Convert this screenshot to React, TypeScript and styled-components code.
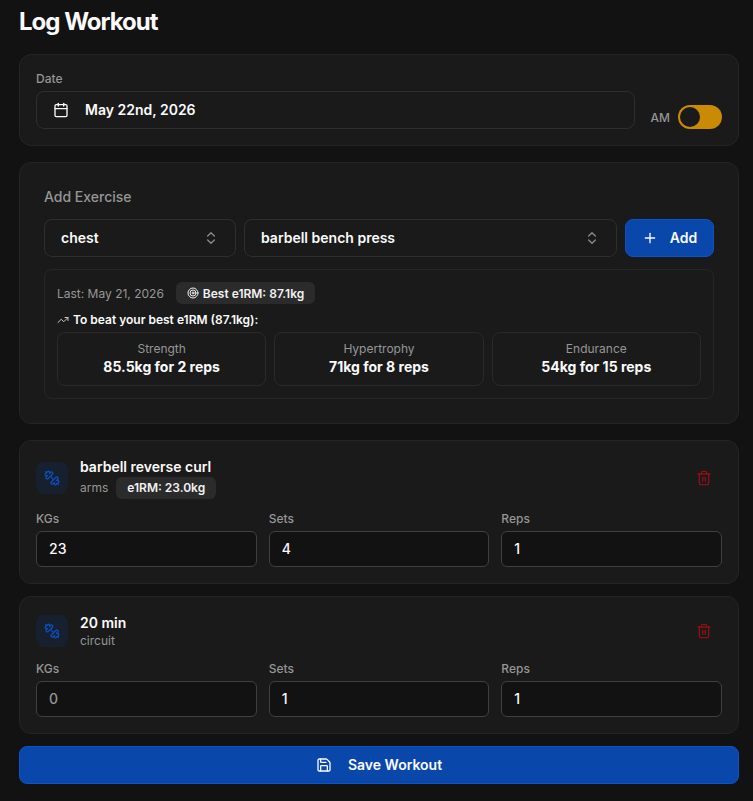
import React from 'react';
import styled, { createGlobalStyle } from 'styled-components';
import { Calendar, ChevronsUpDown, Dumbbell, Plus, Save, Target, Trash2, TrendingUp } from 'lucide-react';

const GlobalStyle = createGlobalStyle`
  html, body {
    margin: 0;
    background: #121212;
    color: #fafafa;
    font-family: Inter, "Liberation Sans", sans-serif;
    height: 801px;
    overflow: hidden;
  }
  * { box-sizing: border-box; }
`;

const Page = styled.div`
  display: flex;
  flex-direction: column;
  padding: 6px 14px 0 19px;
`;

const Title = styled.h1`
  margin: 0 0 16px;
  font-size: 24px;
  line-height: 32px;
  font-weight: 700;
  letter-spacing: -1px;
  color: #fafafa;
`;

const Card = styled.section<{ $mb?: number }>`
  background: #1a1a1a;
  border: 1px solid #242424;
  border-radius: 12px;
  margin-bottom: ${(p) => p.$mb ?? 16}px;
`;

const DateCard = styled(Card)`
  display: flex;
  align-items: flex-end;
  gap: 16px;
  padding: 16px;
  height: 92px;
`;

const DateField = styled.div`
  flex: 1;
`;

const Label = styled.div`
  font-size: 12px;
  line-height: 16px;
  font-weight: 500;
  color: #969696;
  margin-bottom: 4px;
`;

const Outlined = styled.div`
  display: flex;
  align-items: center;
  height: 38px;
  border: 1px solid #2e2e2e;
  border-radius: 8px;
  background: #1a1a1a;
  font-size: 14px;
  line-height: 20px;
  font-weight: 600;
  color: #fafafa;
`;

const DateInput = styled(Outlined)`
  padding: 0 16px;
  gap: 16px;
`;

const Meridiem = styled.div`
  display: flex;
  align-items: center;
  gap: 8px;
  font-size: 12px;
  font-weight: 500;
  color: #969696;
`;

const Toggle = styled.div`
  width: 44px;
  height: 24px;
  border-radius: 12px;
  background: #ca8a04;
  padding: 2px;
`;

const Thumb = styled.div`
  width: 20px;
  height: 20px;
  border-radius: 50%;
  background: #1a1a1a;
`;

const ExerciseCard = styled(Card)`
  padding: 24px;
  height: 262px;
`;

const SectionTitle = styled.div`
  font-size: 14px;
  line-height: 20px;
  font-weight: 500;
  color: #969696;
  margin-bottom: 12px;
`;

const PickerRow = styled.div`
  display: flex;
  gap: 8px;
  margin-bottom: 12px;
`;

const Select = styled(Outlined)<{ $width?: number }>`
  justify-content: space-between;
  padding: 0 16px;
  ${(p) => (p.$width ? `width: ${p.$width}px;` : 'flex: 1;')}
  svg { color: #8a8a8a; }
`;

const PrimaryButton = styled.button`
  display: flex;
  align-items: center;
  justify-content: center;
  gap: 12px;
  border: 1px solid #0f52c4;
  border-radius: 8px;
  background: #0947ab;
  color: #fafafa;
  font-family: inherit;
  font-size: 14px;
  line-height: 20px;
  font-weight: 600;
  padding: 0;
`;

const AddButton = styled(PrimaryButton)`
  width: 89px;
  height: 38px;
`;

const SaveButton = styled(PrimaryButton)`
  width: 720px;
  height: 38px;
  gap: 16px;
`;

const Stats = styled.div`
  border: 1px solid #262626;
  border-radius: 8px;
  padding: 12px;
  height: 130px;
`;

const StatsTop = styled.div`
  display: flex;
  align-items: center;
  gap: 12px;
  font-size: 12px;
  color: #969696;
  height: 22px;
  margin-bottom: 8px;
`;

const Badge = styled.span`
  display: inline-flex;
  align-items: center;
  gap: 4px;
  height: 22px;
  padding: 0 11px;
  border-radius: 6px;
  background: #2b2b2b;
  color: #f2f2f2;
  font-size: 12px;
  font-weight: 600;
`;

const Beat = styled.div`
  display: flex;
  align-items: center;
  gap: 4px;
  font-size: 12px;
  line-height: 16px;
  font-weight: 600;
  color: #fafafa;
  margin-bottom: 4px;
  svg { color: #c8c8c8; }
`;

const Goals = styled.div`
  display: grid;
  grid-template-columns: repeat(3, 1fr);
  gap: 8px;
`;

const Goal = styled.div`
  height: 54px;
  border: 1px solid #2a2a2a;
  border-radius: 8px;
  display: flex;
  flex-direction: column;
  align-items: center;
  justify-content: center;
`;

const GoalName = styled.div`
  font-size: 12px;
  line-height: 16px;
  color: #969696;
`;

const GoalValue = styled.div`
  font-size: 14px;
  line-height: 20px;
  font-weight: 700;
  color: #fafafa;
`;

const ItemCard = styled(Card)`
  padding: 16px;
`;

const ItemHead = styled.div`
  display: flex;
  align-items: center;
  gap: 12px;
  margin-bottom: 12px;
`;

const IconTile = styled.div`
  width: 32px;
  height: 32px;
  border-radius: 8px;
  background: #17202e;
  color: #0b4fc0;
  display: flex;
  align-items: center;
  justify-content: center;
  svg { transform: scaleX(-1); }
`;

const ItemText = styled.div`
  flex: 1;
`;

const ItemName = styled.div`
  font-size: 14px;
  line-height: 20px;
  font-weight: 600;
  color: #fafafa;
`;

const ItemMeta = styled.div`
  display: flex;
  align-items: center;
  gap: 8px;
  font-size: 12px;
  line-height: 16px;
  color: #969696;
`;

const Trash = styled.div`
  color: #8f0f14;
  margin-right: 10px;
  display: flex;
`;

const Fields = styled.div`
  display: grid;
  grid-template-columns: repeat(3, 1fr);
  gap: 12px;
`;

const NumberBox = styled.div<{ $muted?: boolean }>`
  display: flex;
  align-items: center;
  height: 36px;
  padding: 0 12px;
  border: 1px solid #404040;
  border-radius: 6px;
  background: #121212;
  font-size: 14px;
  line-height: 20px;
  font-weight: 500;
  color: ${(p) => (p.$muted ? '#969696' : '#fafafa')};
`;

const items = [
  { name: 'barbell reverse curl', group: 'arms', e1rm: 'e1RM: 23.0kg', kg: '23', sets: '4', reps: '1' },
  { name: '20 min', group: 'circuit', kg: '0', sets: '1', reps: '1', muted: true },
];

const goals = [
  { name: 'Strength', value: '85.5kg for 2 reps' },
  { name: 'Hypertrophy', value: '71kg for 8 reps' },
  { name: 'Endurance', value: '54kg for 15 reps' },
];

export default function App() {
  return (
    <Page>
      <GlobalStyle />
      <Title>Log Workout</Title>

      <DateCard>
        <DateField>
          <Label>Date</Label>
          <DateInput>
            <Calendar size={16} />
            May 22nd, 2026
          </DateInput>
        </DateField>
        <Meridiem>
          AM
          <Toggle>
            <Thumb />
          </Toggle>
        </Meridiem>
      </DateCard>

      <ExerciseCard>
        <SectionTitle>Add Exercise</SectionTitle>
        <PickerRow>
          <Select $width={192}>
            chest
            <ChevronsUpDown size={16} />
          </Select>
          <Select>
            barbell bench press
            <ChevronsUpDown size={16} />
          </Select>
          <AddButton>
            <Plus size={16} />
            Add
          </AddButton>
        </PickerRow>
        <Stats>
          <StatsTop>
            Last: May 21, 2026
            <Badge>
              <Target size={12} />
              Best e1RM: 87.1kg
            </Badge>
          </StatsTop>
          <Beat>
            <TrendingUp size={12} />
            To beat your best e1RM (87.1kg):
          </Beat>
          <Goals>
            {goals.map((g) => (
              <Goal key={g.name}>
                <GoalName>{g.name}</GoalName>
                <GoalValue>{g.value}</GoalValue>
              </Goal>
            ))}
          </Goals>
        </Stats>
      </ExerciseCard>

      {items.map((it) => (
        <ItemCard key={it.name} $mb={12}>
          <ItemHead>
            <IconTile>
              <Dumbbell size={16} />
            </IconTile>
            <ItemText>
              <ItemName>{it.name}</ItemName>
              <ItemMeta>
                {it.group}
                {it.e1rm && <Badge>{it.e1rm}</Badge>}
              </ItemMeta>
            </ItemText>
            <Trash>
              <Trash2 size={16} />
            </Trash>
          </ItemHead>
          <Fields>
            <div>
              <Label>KGs</Label>
              <NumberBox $muted={it.muted}>{it.kg}</NumberBox>
            </div>
            <div>
              <Label>Sets</Label>
              <NumberBox>{it.sets}</NumberBox>
            </div>
            <div>
              <Label>Reps</Label>
              <NumberBox>{it.reps}</NumberBox>
            </div>
          </Fields>
        </ItemCard>
      ))}

      <SaveButton>
        <Save size={16} />
        Save Workout
      </SaveButton>
    </Page>
  );
}
